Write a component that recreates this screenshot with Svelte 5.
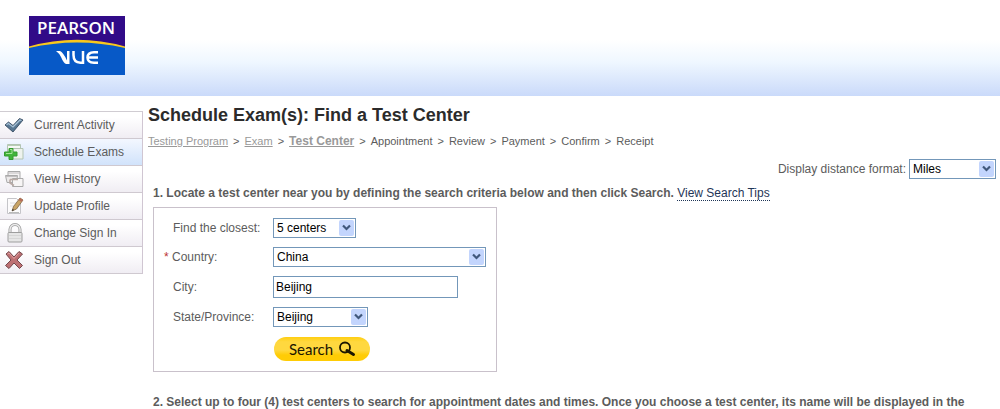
<script lang="ts">
  const menu = [
    { icon: 'check', label: 'Current Activity' },
    { icon: 'add', label: 'Schedule Exams' },
    { icon: 'history', label: 'View History' },
    { icon: 'edit', label: 'Update Profile' },
    { icon: 'lock', label: 'Change Sign In' },
    { icon: 'cross', label: 'Sign Out' }
  ];

  const steps = [
    'Testing Program',
    'Exam',
    'Test Center',
    'Appointment',
    'Review',
    'Payment',
    'Confirm',
    'Receipt'
  ];
  const currentStep = 2;

  let distance = $state('Miles');
  let closest = $state('5 centers');
  let country = $state('China');
  let city = $state('Beijing');
  let province = $state('Beijing');
</script>

{#snippet arrow()}
  <span class="arrow">
    <svg width="15" height="15" viewBox="0 0 15 15">
      <path d="M4 5.5l3.5 3.5L11 5.5" fill="none" stroke="#40587c" stroke-width="2.2" />
    </svg>
  </span>
{/snippet}

{#snippet menuIcon(name: string)}
  <svg width="20" height="20" viewBox="0 0 20 20">
    {#if name === 'check'}
      <path d="M1 10l3.500-3 4.500 3.500 6.500-7 3.500 1.500L9 17z" fill="#587792" stroke="#2b3f56" stroke-width=".8" />
      <path d="M2.500 9.800l2-1.300L9 12l7-7 1.500.6" fill="none" stroke="#a9c2d6" stroke-width="1.200" />
    {:else if name === 'add'}
      <path d="M3.500 2.500h13v11h-13z" fill="#f6f8f6" stroke="#b3c4b3" />
      <path d="M3 3.500h13" stroke="#b7cdb5" />
      <path d="M8 6.500h11v10.500H8z" fill="#eef3ee" stroke="#b3c4b3" />
      <path d="M5 6.500h4v3.500h4v4H9v3.500H5V14H.5v-4H5z" fill="#42b53a" stroke="#359a31" />
      <path d="M6 7.500h2v4H2" fill="none" stroke="#a7e59b" />
    {:else if name === 'history'}
      <path d="M4 2.500h12v9H4z" fill="#f4f2f3" stroke="#aaa" />
      <path d="M1.500 6.500h12l-1 7H3z" fill="#eceaea" stroke="#aaa" />
      <path d="M4 4h12M2 7.500h11" stroke="#c2bfc0" />
      <path d="M8.500 9.500h10.500v8H8.500z" fill="#f7f5f5" stroke="#aaa" />
      <path d="M6 10.500h8M6 10.500v3.500l4 2.500" fill="none" stroke="#b9aaa5" stroke-width="1.600" />
    {:else if name === 'edit'}
      <path d="M3.500 2.500h9l4 4v11h-13z" fill="#fcfbfc" stroke="#c5c5c9" />
      <path d="M6 7h6M6 10h6" stroke="#dedee2" />
      <path d="M8 15l1.500-4.500L16 2l3 2-6.500 9z" fill="#c9a467" stroke="#7e6646" stroke-width=".8" />
      <path d="M16 2l3 2-1.500 2-3-2z" fill="#b86e5a" />
      <path d="M8 15l.6-2 1.600 1z" fill="#333" />
      <path d="M5 16.500h10" stroke="#bbb" />
    {:else if name === 'lock'}
      <path d="M6 10V6.500a5 5 0 0 1 10 0V10" fill="none" stroke="#9b9b9b" stroke-width="3" />
      <path d="M6 10V6.500a5 5 0 0 1 10 0V10" fill="none" stroke="#ececec" stroke-width="1.400" />
      <rect x="4" y="9.500" width="14" height="9.500" rx="1" fill="#e6e6e6" stroke="#9e9e9e" />
      <path d="M5 12.500h12M5 15.500h12" stroke="#d6d6d6" />
    {:else}
      <path d="M2 4l3-2.500L10 7l5-5.500L18.500 4l-5.500 6 5.500 5.500-3 3-5.500-5.500-5 5.500-3.500-3L7 10z" fill="#bd7073" stroke="#74474b" />
      <path d="M3.500 4l1.500-1 5 5.500L15 3" fill="none" stroke="#e3a2a2" />
    {/if}
  </svg>
{/snippet}

<div class="page">
  <header>
    <svg class="logo" width="96" height="59" viewBox="0 0 96 59" role="img" aria-label="Pearson VUE">
      <rect width="96" height="59" fill="#0759c7" />
      <path d="M0 0h96v31Q48 18 0 31z" fill="#310b88" />
      <path d="M0 30.500Q48 17 96 30.500v1.500Q48 21 0 32z" fill="#f9c81c" />
      <text x="8" y="18" class="wordmark">PEARSON</text>
      <g fill="none" stroke="#fff" stroke-width="2.500">
        <path d="M27 35h4q3 1 7 9.500V35h2.500v13H37q-2.500-1-5-7-1.500-3.500-5-6z" fill="#fff" stroke="none" />
        <path d="M44.500 35v4q0 7.500 7 7.800H54V35" />
        <path d="M69 36.200h-4q-6.500.3-6.500 5.300t6.500 5.300h4M59 41.500h10" />
      </g>
    </svg>
  </header>

  <div class="body">
    <nav>
      <ul>
        {#each menu as item}
          <li class:active={item.icon === 'add'}>
            <a href="#{item.icon}">
              {@render menuIcon(item.icon)}
              {item.label}
            </a>
          </li>
        {/each}
      </ul>
    </nav>

    <main>
      <h1>Schedule Exam(s): Find a Test Center</h1>
      <div class="steps">
        {#each steps as step, i}
          {#if i > 0}<span>&gt;</span>{/if}
          {#if i <= currentStep}
            <a href="#step-{i}" class:current={i === currentStep}>{step}</a>
          {:else}
            <span>{step}</span>
          {/if}
        {/each}
      </div>

      <div class="distance">
        <label for="distance">Display distance format:</label>
        <span class="dropdown miles">
          <select id="distance" bind:value={distance}>
            <option>Miles</option>
            <option>Kilometers</option>
          </select>
          {@render arrow()}
        </span>
      </div>

      <p class="instruction">
        <strong>1. Locate a test center near you by defining the search criteria below and then click Search.</strong>
        <a href="#tips">View Search Tips</a>
      </p>

      <form onsubmit={(e) => e.preventDefault()}>
        <label for="closest">Find the closest:</label>
        <span class="dropdown closest">
          <select id="closest" bind:value={closest}>
            <option>5 centers</option>
            <option>10 centers</option>
          </select>
          {@render arrow()}
        </span>

        <label for="country" class="required"><span>*</span> Country:</label>
        <span class="dropdown country">
          <select id="country" bind:value={country}>
            <option>China</option>
          </select>
          {@render arrow()}
        </span>

        <label for="city">City:</label>
        <input id="city" type="text" bind:value={city} />

        <label for="province">State/Province:</label>
        <span class="dropdown province">
          <select id="province" bind:value={province}>
            <option>Beijing</option>
          </select>
          {@render arrow()}
        </span>

        <button type="submit">
          Search
          <svg width="18" height="16" viewBox="0 0 18 16">
            <circle cx="7" cy="6.500" r="5" fill="none" stroke="#1c1600" stroke-width="1.800" />
            <path d="M9 9.500l6.500 4" stroke="#1c1600" stroke-width="3" stroke-linecap="round" />
          </svg>
        </button>
      </form>

      <p class="instruction second">
        <strong>2. Select up to four (4) test centers to search for appointment dates and times. Once you choose a test center, its name will be displayed in the</strong>
      </p>
    </main>
  </div>
</div>

<style>
  :global(body) {
    margin: 0;
    background: #fff;
  }

  .page {
    font-family: 'Liberation Sans', Arial, sans-serif;
    font-size: 12px;
    line-height: 16px;
    color: #5c5c5c;
  }

  header {
    height: 96px;
    padding: 16px 29px 0;
    box-sizing: border-box;
    background: linear-gradient(#fff 40px, #eff7ff 62px, #cadafa 96px);
  }

  .logo {
    display: block;
  }

  .wordmark {
    font: 600 17px 'Open Sans', sans-serif;
    fill: #fff;
  }

  .body {
    display: flex;
    gap: 5px;
  }

  nav {
    flex: 0 0 143px;
    padding-top: 15px;
  }

  ul {
    list-style: none;
    margin: 0;
    padding: 0;
    border-top: 1px solid #d0ccd2;
    border-right: 1px solid #d0c6d2;
  }

  li {
    height: 26px;
    border-bottom: 1px solid #cfc9d0;
    background: linear-gradient(#fff 20%, #f0edf3);
  }

  li.active {
    background: linear-gradient(#f3f7ff, #d1e3fb);
  }

  li a {
    display: flex;
    align-items: center;
    gap: 10px;
    height: 26px;
    padding-left: 4px;
    color: #5c5c5c;
    text-decoration: none;
  }

  main {
    flex: 1;
    min-width: 0;
    padding: 8px 4px 0 0;
  }

  h1 {
    margin: 0;
    font-size: 18px;
    line-height: 22px;
    color: #2b2b2b;
  }

  .steps {
    display: flex;
    gap: 5px;
    margin-top: 8px;
    font-size: 11px;
    line-height: 14px;
  }

  .steps a {
    color: #999;
  }

  .steps .current {
    font-size: 12px;
    font-weight: bold;
  }

  .distance {
    display: flex;
    justify-content: flex-end;
    align-items: center;
    gap: 3px;
    margin-top: 11px;
  }

  .dropdown {
    display: inline-block;
    position: relative;
    height: 20px;
  }

  select,
  input {
    width: 100%;
    height: 20px;
    margin: 0;
    padding: 0 20px 0 3px;
    box-sizing: border-box;
    border: 1px solid #7397b9;
    border-radius: 0;
    background: #fff;
    color: #000;
    font: inherit;
    appearance: none;
    display: block;
  }

  input {
    width: 185px;
    height: 22px;
    padding: 0 2px;
  }

  .miles {
    width: 87px;
  }

  .closest {
    width: 83px;
  }

  .country {
    width: 213px;
  }

  .province {
    width: 95px;
  }

  .arrow {
    position: absolute;
    top: 2px;
    right: 2px;
    width: 15px;
    height: 16px;
    border-radius: 2px;
    background: #c3d5fd;
    pointer-events: none;
  }

  .instruction {
    margin: 6px 0 0 5px;
    white-space: nowrap;
  }

  .instruction a {
    color: #1f3557;
    text-decoration: none;
    border-bottom: 1px dotted #1f3557;
  }

  form {
    display: grid;
    grid-template-columns: 100px auto;
    justify-content: start;
    align-items: center;
    row-gap: 9px;
    width: 344px;
    margin: 6px 0 0 5px;
    padding: 10px 0 10px 19px;
    box-sizing: border-box;
    border: 1px solid #c9c1cb;
  }

  .required {
    margin-left: -9px;
  }

  .required span {
    color: #b33;
  }

  button {
    grid-column: 2;
    display: flex;
    align-items: center;
    gap: 5px;
    width: 96px;
    height: 24px;
    margin: 1px 0 0 1px;
    padding: 0 0 0 15px;
    border: 0;
    border-radius: 12px;
    background: linear-gradient(#ffce10, #ffd83f 20%, #ffd83f 55%, #ffcc05 75%);
    color: #1c1600;
    font: 15px Lato, sans-serif;
  }

  .second {
    margin-top: 22px;
  }
</style>
